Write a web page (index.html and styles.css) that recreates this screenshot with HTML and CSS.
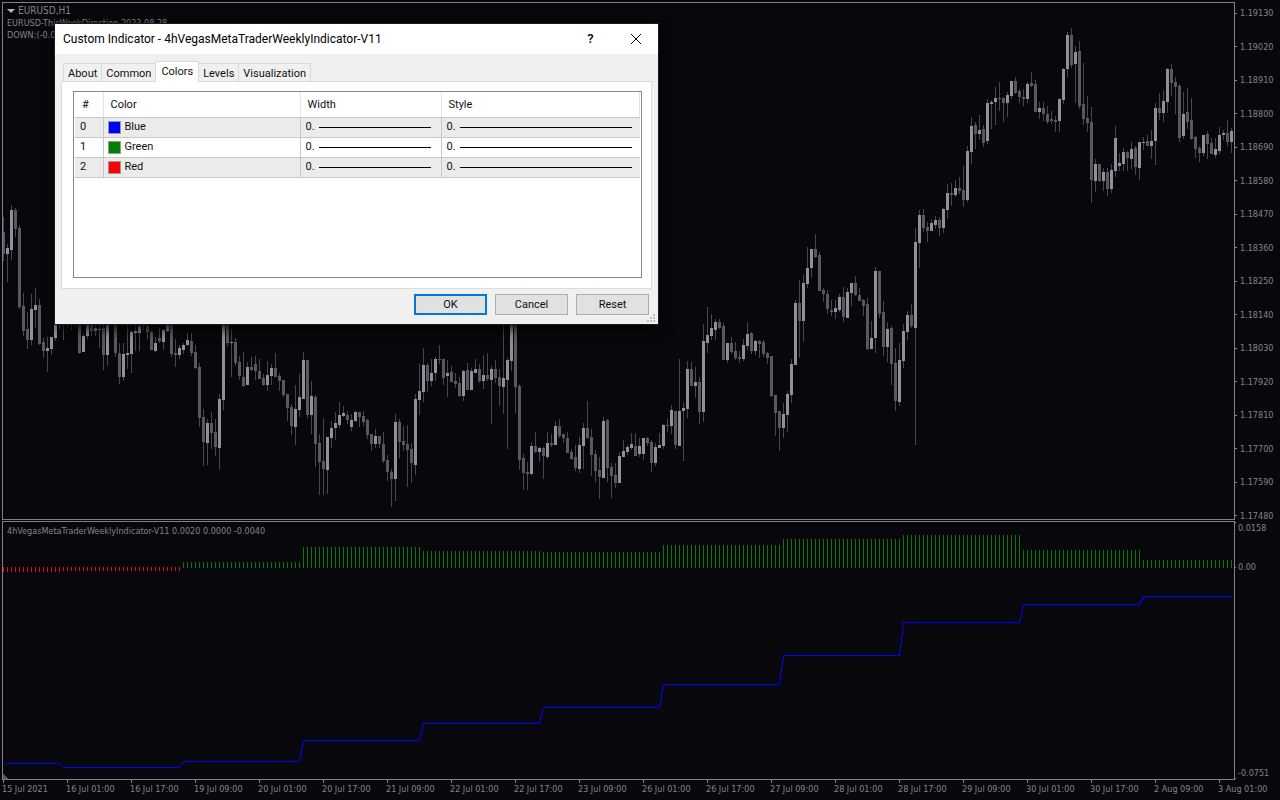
FILE: index.html
```
<!DOCTYPE html>
<html lang="en">
<head>
<meta charset="utf-8">
<title>EURUSD,H1</title>
<link rel="stylesheet" href="styles.css">
</head>
<body>
<main class="terminal">
  <section class="pane price">
    <div class="plot">
      <svg class="drawing" viewBox="3 3 1231 516" preserveAspectRatio="none" aria-hidden="true">
        <path class="wick" id="wicks"/>
        <path class="bear" id="bears"/>
        <path class="bull" id="bulls"/>
      </svg>
      <div class="legend">
        <p class="symbol"><svg class="caret" viewBox="0 0 8 4"><path d="M0 0h8L4 4z"/></svg>EURUSD,H1</p>
        <p>EURUSD-ThisWeekDirection 2023.08.28</p>
        <p>DOWN:(-0.0</p>
      </div>
    </div>
    <div class="scale" id="prices"></div>
  </section>
  <section class="pane indicator">
    <div class="plot">
      <svg class="drawing" viewBox="3 522 1231 257" preserveAspectRatio="none" aria-hidden="true">
        <path class="down-bar" id="downBars"/>
        <path class="up-bar" id="upBars"/>
        <polyline class="level-line" id="levelLine"/>
        <path class="corner" d="M3 774l5 5H3z"/>
      </svg>
      <div class="legend"><p>4hVegasMetaTraderWeeklyIndicator-V11 0.0020 0.0000 -0.0040</p></div>
    </div>
    <div class="scale levels">
      <span class="first">0.0158</span><span class="zero">0.00</span><span class="last">-0.0751</span>
    </div>
  </section>
  <footer class="times" id="times"></footer>
</main>

<div class="dialog" role="dialog" aria-labelledby="dialog-title">
  <header class="titlebar">
    <h1 id="dialog-title">Custom Indicator - 4hVegasMetaTraderWeeklyIndicator-V11</h1>
    <button class="caption help" type="button" aria-label="Help">?</button>
    <button class="caption" type="button" aria-label="Close"><svg class="cross" viewBox="0 0 10 10"><path d="M0 0l10 10M10 0L0 10"/></svg></button>
  </header>
  <div class="body">
    <div class="tabs" role="tablist">
      <button type="button" role="tab" class="tab">About</button>
      <button type="button" role="tab" class="tab">Common</button>
      <button type="button" role="tab" class="tab active" aria-selected="true">Colors</button>
      <button type="button" role="tab" class="tab">Levels</button>
      <button type="button" role="tab" class="tab">Visualization</button>
    </div>
    <div class="page" role="tabpanel">
      <div class="list">
        <table>
          <colgroup><col class="c-index"><col class="c-color"><col class="c-width"><col></colgroup>
          <thead><tr><th>#</th><th>Color</th><th>Width</th><th>Style</th></tr></thead>
          <tbody>
            <tr><td>0</td><td><span class="cell"><i class="swatch blue"></i>Blue</span></td><td><span class="cell">0.<i class="rule"></i></span></td><td><span class="cell">0.<i class="rule"></i></span></td></tr>
            <tr><td>1</td><td><span class="cell"><i class="swatch green"></i>Green</span></td><td><span class="cell">0.<i class="rule"></i></span></td><td><span class="cell">0.<i class="rule"></i></span></td></tr>
            <tr><td>2</td><td><span class="cell"><i class="swatch red"></i>Red</span></td><td><span class="cell">0.<i class="rule"></i></span></td><td><span class="cell">0.<i class="rule"></i></span></td></tr>
          </tbody>
        </table>
      </div>
    </div>
    <div class="actions">
      <button type="button" class="default">OK</button>
      <button type="button">Cancel</button>
      <button type="button">Reset</button>
    </div>
  </div>
  <svg class="grip" viewBox="0 0 8 8" aria-hidden="true"><path d="M6 0h2v2H6zM3 3h2v2H3zM6 3h2v2H6zM0 6h2v2H0zM3 6h2v2H3zM6 6h2v2H6z"/></svg>
</div>
<script src="chart.js"></script>
</body>
</html>
```

FILE: styles.css
```
* { box-sizing: border-box; }
html, body { height: 100%; }
body {
  margin: 0;
  overflow: hidden;
  background: #08070c;
  color: #85858a;
  font: 9px/12px "DejaVu Sans Condensed", "DejaVu Sans", sans-serif;
}
p, h1 { margin: 0; font-weight: normal; }
button { font: inherit; color: inherit; padding: 0; }

.terminal {
  display: flex;
  flex-direction: column;
  height: 100%;
  padding: 2px 0 0 2px;
}
.pane { display: grid; grid-template-columns: 1fr 45px; min-height: 0; }
.price { flex: 518 1 0; margin-bottom: 1px; }
.indicator { flex: 259 1 0; }
.plot { display: grid; border: 1px solid #807f89; min-height: 0; overflow: hidden; }
.drawing, .legend { grid-area: 1 / 1; }
.drawing { display: block; width: 100%; height: 100%; min-height: 0; shape-rendering: crispEdges; }
.legend { padding: 3px 4px; justify-self: start; white-space: nowrap; }
.price .legend { padding-top: 2px; }
.symbol { display: flex; align-items: center; gap: 3px; font-size: 10px; }
.caret { width: 8px; height: 4px; fill: #b5b5b8; }
.wick { fill: #48484a; }
.bear { fill: #58595c; }
.bull { fill: #8f8f9e; }
.down-bar { fill: #e01010; }
.up-bar { fill: #087808; }
.level-line { fill: none; stroke: #00f; stroke-width: 1; }
.corner { fill: #55555c; }

.scale { display: flex; flex-direction: column; justify-content: space-between; padding: 5px 0 0; margin-bottom: -2px; }
.scale span { display: flex; align-items: center; gap: 3px; white-space: nowrap; }
.scale span::before { content: ""; width: 2px; height: 1px; background: #85858a; }
.levels { justify-content: flex-start; padding: 0; margin: 0; }
.levels span { gap: 2px; }
.levels span::before { width: 1px; }
.levels .first { padding-top: 1px; }
.levels .first::before { align-self: flex-start; }
.levels .zero { margin-top: 27px; }
.levels .last { margin-top: auto; padding-bottom: 1px; }
.levels .last::before { align-self: flex-end; }

.times { display: flex; height: 20px; width: 100vw; }
.times span { flex: 0 0 5%; white-space: nowrap; }
.times span::before { content: ""; display: block; width: 1px; height: 3px; margin-left: 1px; background: #85858a; }

.dialog {
  position: absolute;
  left: 55px;
  top: 24px;
  width: 603px;
  background: #f0f0f0;
  color: #101010;
  font: 11px/14px Roboto, "Liberation Sans", sans-serif;
  box-shadow: 0 0 0 1px #1c1c1c, 2px 4px 12px #000;
}
.titlebar { display: flex; align-items: center; height: 30px; padding-left: 8px; background: #fff; color: #000; }
.titlebar h1 { flex: 1; font: 12px/16px Roboto, "Open Sans", sans-serif; }
.caption { display: grid; place-items: center; width: 45px; height: 30px; border: 0; background: none; }
.help { font: 500 13px/16px Roboto, "Open Sans", sans-serif; }
.cross { width: 10px; height: 10px; overflow: visible; fill: none; stroke: #000; }
.body { padding: 7px 6px 9px; }
.tabs { display: flex; align-items: flex-end; height: 21px; padding-left: 2px; margin-bottom: -1px; }
.tab { height: 19px; padding: 2px 4px 0; border: 1px solid #d9d9d9; background: #f0f0f0; margin-right: -1px; }
.tab.active { height: 21px; padding: 0 5px 1px; background: #fff; border-bottom: 0; z-index: 1; }
.page { border: 1px solid #dcdcdc; background: #fff; padding: 9px 9px 10px 11px; height: 208px; }
.list { height: 187px; border: 1px solid #828790; padding: 0 1px; }
table { width: 100%; border-collapse: collapse; table-layout: fixed; }
.c-index { width: 28px; }
.c-color { width: 197px; }
.c-width { width: 141px; }
th { height: 25px; padding: 2px 0 0 7px; text-align: left; font-weight: normal; border-right: 1px solid #e5e5e5; border-bottom: 1px solid #c8c8c8; }
td { height: 20px; padding: 0 8px 0 5px; border-right: 1px solid #c8c8c8; border-bottom: 1px solid #c8c8c8; }
td:nth-child(3) { padding-right: 10px; }
td:last-child { border-right: 0; }
tbody tr:nth-child(odd) { background: #ebebeb; }
.cell { display: flex; align-items: center; gap: 4px; }
.swatch { width: 13px; height: 13px; border: 1px solid #999; margin-left: -1px; }
.blue { background: #00f; }
.green { background: #008000; }
.red { background: #f00; }
.rule { flex: 1; height: 1px; background: #000; }
.actions { display: flex; justify-content: flex-end; gap: 8px; padding: 5px 3px 0 0; }
.actions button { width: 73px; height: 21px; border: 1px solid #adadad; background: #e1e1e1; }
.actions .default { border: 2px solid #0078d7; }
.grip { position: absolute; right: 3px; bottom: 2px; width: 8px; height: 8px; fill: #bfbfbf; }
```

FILE: chart.js
```
// Each candle: high, body top, body bottom, low, direction (u/d).
const candles = `
217 232 254 261 d;244 248 254 282 u;205 210 250 260 u;208 210 229 237 d;225 228 307 309 d;293 306 331 336 d;312 329 340 349 d;294 309 340 345 u;
288 305 310 328 u;299 305 344 345 d;338 342 351 358 d;337 348 351 372 u;337 337 349 355 u;320 324 338 341 u;300 305 322 329 u;300 305 320 340 d;
300 305 320 327 d;300 305 325 330 d;300 305 325 328 d;300 305 353 354 d;334 336 352 352 u;300 305 336 339 u;300 305 331 336 d;324 328 331 336 u;
325 329 330 348 u;324 328 355 370 d;300 305 355 366 u;300 305 315 320 u;300 305 353 357 d;343 353 377 384 d;343 354 377 381 u;324 353 355 369 u;
330 332 354 373 u;320 331 333 351 u;320 326 333 351 u;320 325 326 330 d;320 326 332 339 d;331 332 350 350 d;337 343 351 352 u;327 338 341 343 d;
329 330 342 350 u;300 305 331 332 u;300 305 354 357 d;339 353 355 367 d;345 348 355 359 u;343 345 350 354 u;333 340 345 346 u;333 341 353 356 d;
345 352 368 369 d;363 367 418 427 d;409 417 442 466 d;419 423 443 465 u;412 423 433 449 d;419 432 447 456 d;394 399 448 470 u;300 305 400 410 u;
300 305 343 346 d;329 342 343 377 u;338 342 363 366 d;356 362 376 380 d;352 377 386 387 d;362 367 385 385 u;357 367 370 371 d;356 364 371 380 d;
359 371 379 379 d;374 378 385 386 d;361 375 385 391 u;364 368 376 385 u;353 368 377 377 d;373 376 381 391 d;380 380 395 397 d;394 394 408 421 d;
404 407 426 435 d;385 409 427 445 u;374 397 410 417 u;352 360 399 399 u;360 360 415 418 d;381 396 415 434 u;395 397 444 467 d;434 443 462 495 d;
418 461 469 495 d;437 437 470 494 u;421 428 438 448 u;412 423 428 440 u;402 415 425 428 u;406 413 416 417 u;411 415 420 424 d;414 420 427 431 u;
411 412 421 422 u;412 412 417 427 d;411 416 422 426 d;419 420 435 439 d;434 434 444 451 d;429 436 444 448 u;436 436 444 448 d;432 444 461 463 d;
455 460 472 481 d;469 472 479 507 d;414 422 479 501 u;419 422 442 458 d;426 441 445 451 d;425 444 450 487 d;443 449 463 483 d;394 399 465 475 u;
364 391 400 415 u;348 365 392 402 u;363 365 381 392 d;359 373 381 386 u;357 359 373 381 u;345 359 360 364 d;359 359 378 385 d;360 373 376 397 u;
366 372 382 382 d;373 381 384 388 d;377 383 396 397 d;370 371 396 401 u;363 370 390 390 d;368 371 390 390 u;359 369 373 373 u;364 369 381 383 d;
355 375 381 389 u;353 375 379 381 d;366 369 380 424 u;360 369 378 383 d;369 377 386 406 d;320 378 387 414 u;358 360 380 449 u;300 305 361 371 u;
300 305 387 413 d;384 386 460 470 d;454 458 473 490 d;462 472 474 490 d;442 446 474 475 u;432 446 452 453 d;447 448 452 462 u;447 448 456 479 d;
432 443 457 459 u;434 443 445 447 d;421 426 445 445 u;419 426 436 438 d;434 434 438 443 d;432 438 453 453 d;449 452 459 460 d;445 457 468 471 d;
437 445 469 473 u;423 428 446 469 u;401 428 438 439 d;429 437 455 476 d;450 454 471 482 d;457 470 477 499 d;417 421 478 478 u;419 420 468 482 d;
463 467 476 498 d;463 475 483 488 d;452 456 483 483 u;440 451 457 457 u;445 447 452 455 u;433 444 448 450 u;433 446 456 456 d;438 446 454 457 u;
438 438 454 460 u;437 438 443 446 d;440 442 463 472 d;443 447 463 466 u;433 445 448 448 u;424 425 446 449 u;419 425 426 432 d;405 410 426 434 u;
411 411 445 449 d;359 411 446 446 u;402 408 411 461 u;361 369 409 418 u;362 369 386 386 d;367 382 386 398 u;377 382 412 424 d;324 341 412 422 u;
307 335 343 353 u;314 328 336 340 u;319 322 330 340 u;319 322 328 329 d;323 326 360 360 d;343 343 360 363 u;337 343 352 354 d;342 351 358 360 d;
351 357 359 363 d;339 345 359 361 u;322 334 346 350 u;332 333 351 354 d;340 341 351 355 u;340 341 344 358 d;340 342 354 357 d;352 353 358 364 d;
356 356 396 397 d;395 395 413 436 d;411 411 428 451 d;403 414 428 438 u;391 394 415 432 u;359 364 395 403 u;300 303 365 365 u;280 303 321 358 d;
275 283 321 342 u;247 268 284 288 u;249 249 268 278 u;234 249 257 258 d;252 255 291 291 d;288 290 294 302 d;290 294 309 314 d;300 310 312 316 d;
300 308 312 319 u;294 297 310 312 u;287 297 317 322 d;288 292 318 318 u;283 283 293 306 u;276 283 295 296 d;288 295 301 301 d;299 300 306 316 d;
298 304 349 350 d;321 338 349 349 u;267 271 338 353 u;271 271 314 318 d;301 312 347 356 d;322 329 347 362 u;326 328 364 385 d;348 363 401 411 d;
343 360 402 406 u;324 331 361 368 u;311 315 332 340 u;304 315 326 328 d;228 242 328 445 u;210 215 243 268 u;209 215 228 232 d;222 227 231 242 d;
219 223 231 231 u;216 220 225 229 u;217 220 228 236 d;208 209 228 233 u;184 193 210 219 u;183 193 195 206 d;180 188 195 197 u;177 188 191 194 d;
166 190 200 207 d;146 151 200 202 u;117 126 152 164 u;122 125 134 149 d;115 130 134 140 u;125 129 143 147 d;99 103 141 144 u;100 102 104 129 u;
87 98 102 125 u;82 98 99 111 d;97 98 103 122 d;92 95 103 117 u;81 81 96 99 u;77 81 93 94 d;89 91 97 103 d;89 97 99 106 d;
82 84 99 103 u;72 83 86 87 d;80 84 112 112 d;102 108 112 119 u;102 108 114 121 d;106 114 122 124 d;111 119 121 124 d;116 120 122 132 d;
98 99 121 132 u;68 69 100 104 u;32 35 69 77 u;28 35 65 68 d;46 52 64 103 u;41 51 106 109 d;63 104 119 125 d;96 118 123 132 d;
107 122 180 203 d;159 164 181 192 u;164 164 181 182 d;168 172 181 191 u;168 172 189 196 d;164 170 189 193 u;126 138 171 177 u;153 163 166 171 u;
148 152 164 171 u;151 152 158 171 d;142 149 159 169 u;146 148 167 175 d;142 142 168 180 u;137 142 143 150 u;135 141 146 146 d;130 141 146 159 u;
103 108 141 165 u;93 108 113 120 d;90 101 113 122 u;68 69 102 113 u;64 69 83 96 d;77 82 87 114 d;84 86 138 142 d;92 114 136 139 u;
88 112 122 129 d;98 120 139 140 d;136 137 149 158 d;146 148 153 162 d;135 135 153 156 u;131 134 144 159 d;138 143 154 154 d;138 149 155 158 u;
127 135 151 154 u;130 133 135 140 u;120 133 142 146 d;128 131 142 153 u`;

const STEP = 4;
const FIRST = 3;
const rect = (x, y, w, h) => `M${x} ${y}h${w}v${h}h${-w}z`;
const draw = (id, d) => document.getElementById(id).setAttribute("d", d);

let wicks = "", bulls = "", bears = "";
candles.trim().split(/;\s*/).filter(Boolean).forEach((row, i) => {
  const [high, top, bottom, low, dir] = row.split(" ");
  const x = FIRST + i * STEP;
  wicks += rect(x, +high, 1, low - high);
  const body = rect(x - 1, +top, 3, bottom - top);
  if (dir === "u") bulls += body; else bears += body;
});
draw("wicks", wicks);
draw("bulls", bulls);
draw("bears", bears);

// Sessions of the indicator: first x, last x, bar top, bar bottom, level y.
const sessions = [
  [3, 59, 567, 572, 763], [63, 179, 567, 571, 767], [183, 299, 562, 568, 761],
  [303, 419, 547, 568, 740], [423, 539, 551, 568, 723], [543, 659, 552, 568, 707],
  [663, 779, 545, 568, 684], [783, 899, 539, 568, 655], [903, 1019, 535, 568, 622],
  [1023, 1139, 550, 568, 604], [1143, 1231, 560, 568, 596]
];
let up = "", down = "";
const points = [];
sessions.forEach(([from, to, top, bottom, level]) => {
  for (let x = from; x <= to; x += STEP) {
    if (top === 567) down += rect(x, top, 1, bottom - top);
    else up += rect(x, top, 1, bottom - top);
  }
  points.push(`${from + 0.5},${level + 0.5}`, `${to + 0.5},${level + 0.5}`);
});
draw("upBars", up);
draw("downBars", down);
document.getElementById("levelLine").setAttribute("points", points.join(" "));

const fill = (id, labels) => {
  document.getElementById(id).append(...labels.map(text => {
    const span = document.createElement("span");
    span.textContent = text;
    return span;
  }));
};
fill("prices", Array.from({ length: 16 }, (_, i) => ((119130 - 110 * i) / 100000).toFixed(5)));
fill("times", ["15 Jul 2021", "16 Jul 01:00", "16 Jul 17:00", "19 Jul 09:00", "20 Jul 01:00",
  "20 Jul 17:00", "21 Jul 09:00", "22 Jul 01:00", "22 Jul 17:00", "23 Jul 09:00",
  "26 Jul 01:00", "26 Jul 17:00", "27 Jul 09:00", "28 Jul 01:00", "28 Jul 17:00",
  "29 Jul 09:00", "30 Jul 01:00", "30 Jul 17:00", "2 Aug 09:00", "3 Aug 01:00"]);
```
